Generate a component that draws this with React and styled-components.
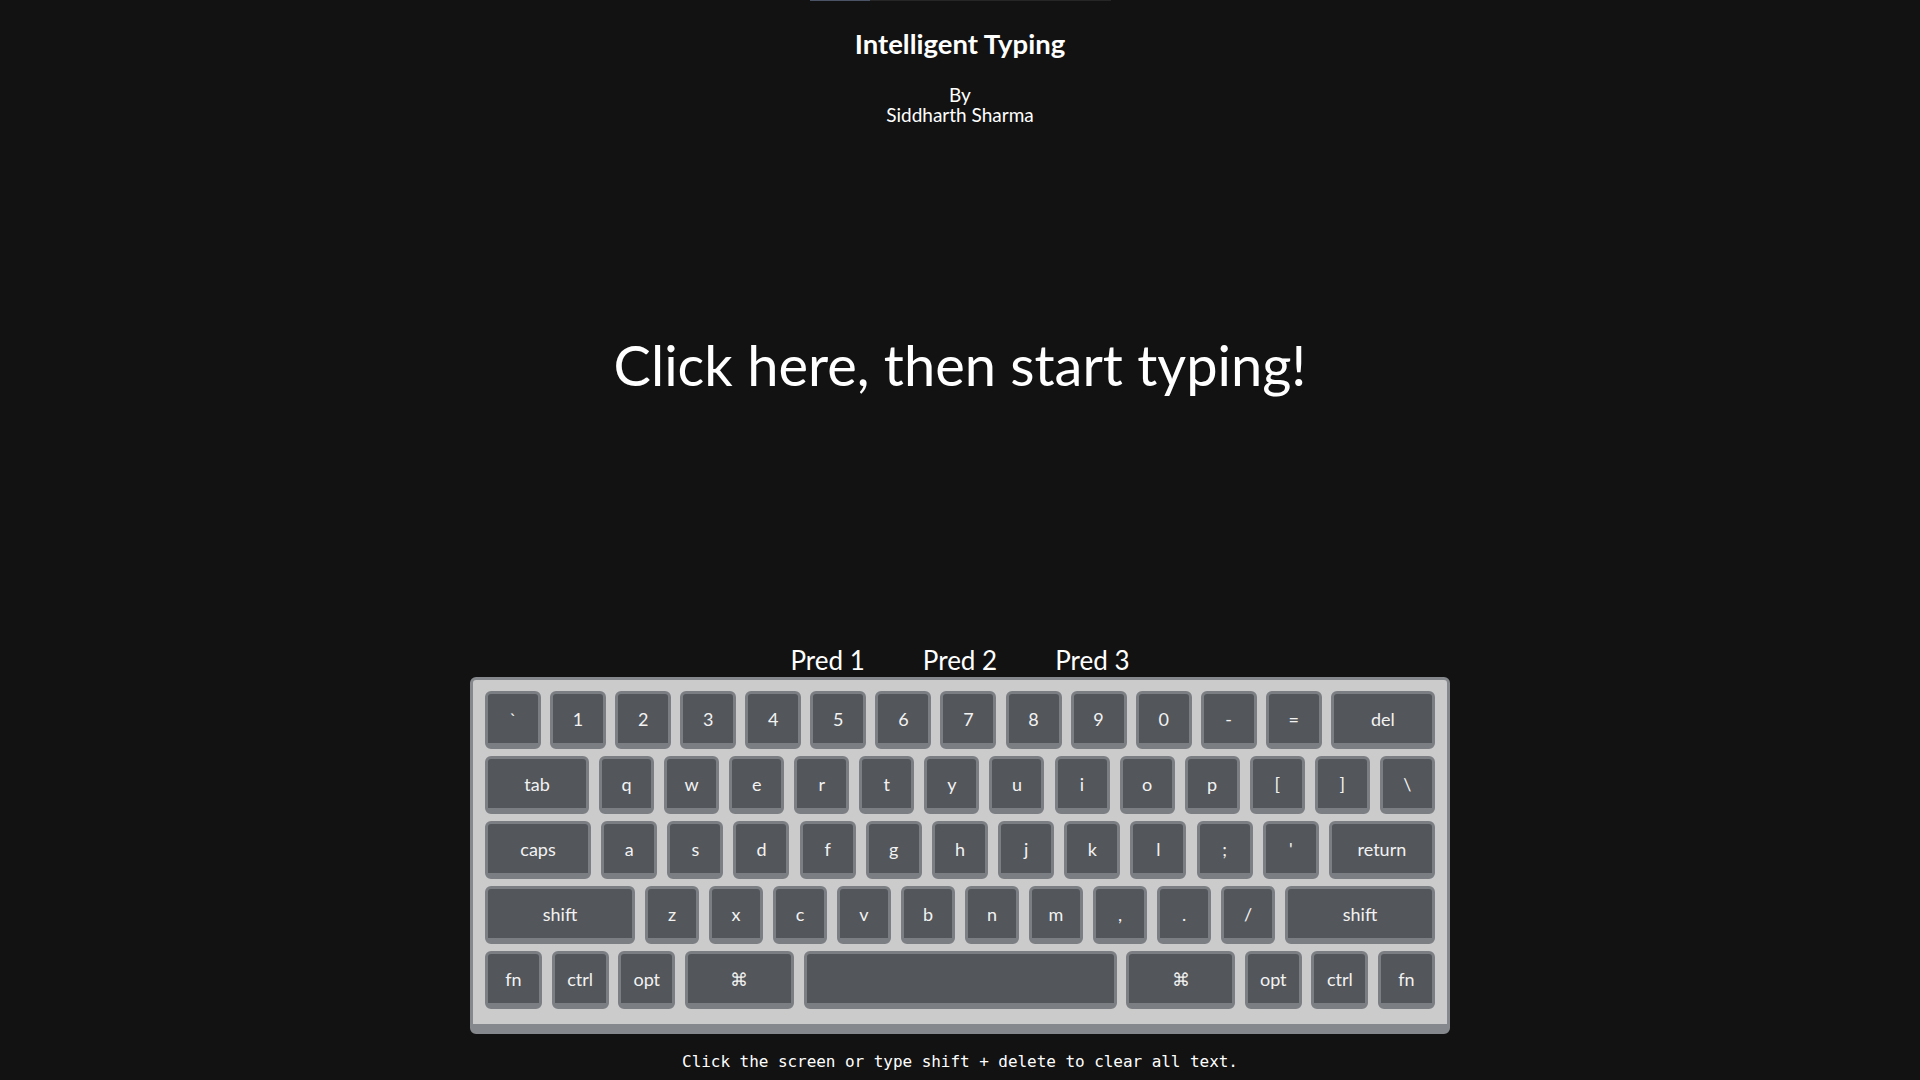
import React from "react";
import styled, { createGlobalStyle } from "styled-components";

const GlobalStyle = createGlobalStyle`
  html, body {
    margin: 0;
    padding: 0;
    background: #121212;
  }
  body {
    color: #ffffff;
    font-family: Lato, "Noto Sans", sans-serif;
  }
`;

const Page = styled.div`
  min-height: 100vh;
  display: flex;
  flex-direction: column;
  align-items: center;
`;

const Track = styled.div`
  width: 301px;
  height: 1px;
  background: #262626;
  display: flex;
`;

const Thumb = styled.div`
  width: 60px;
  height: 1px;
  background: #4a5466;
`;

const Title = styled.h2`
  margin: 27px 0 0;
  font-size: 27.5px;
  line-height: 32px;
  font-weight: 700;
  text-align: center;
`;

const Author = styled.div`
  margin-top: 25px;
  font-size: 19px;
  line-height: 20px;
  text-align: center;
`;

const Prompt = styled.div`
  margin-top: 206px;
  font-size: 56px;
  line-height: 67px;
  font-weight: 400;
  text-align: center;
`;

const Preds = styled.div`
  margin-top: 247px;
  display: flex;
  gap: 58px;
  justify-content: center;
  font-size: 26px;
  line-height: 30px;
`;

const Pred = styled.span`
  color: #ffffff;
`;

const Keyboard = styled.div`
  margin-top: 2px;
  width: 980px;
  box-sizing: border-box;
  background: #cbcbcb;
  border: 3px solid #85888c;
  border-bottom-width: 10px;
  border-radius: 6px;
  padding: 11px 12px 15px;
  display: flex;
  flex-direction: column;
  gap: 7px;
`;

const Row = styled.div`
  display: flex;
  justify-content: space-between;
`;

const Key = styled.div`
  width: ${(p) => p.$w}px;
  height: 58px;
  box-sizing: border-box;
  background: #53565b;
  border: 3px solid #7b7e83;
  border-bottom-width: 6px;
  border-radius: 6px;
  display: flex;
  align-items: center;
  justify-content: center;
  color: #f2f2f2;
  font-size: 18px;
  line-height: 1;
`;

const Footer = styled.div`
  margin-top: 18px;
  font-family: "DejaVu Sans Mono", "Liberation Mono", monospace;
  font-size: 16px;
  line-height: 20px;
  color: #ffffff;
  letter-spacing: -0.05px;
`;

const rows = [
  [
    ...["`", "1", "2", "3", "4", "5", "6", "7", "8", "9", "0", "-", "="].map((k) => [k, 56]),
    ["del", 104],
  ],
  [
    ["tab", 104],
    ...["q", "w", "e", "r", "t", "y", "u", "i", "o", "p", "[", "]", "\\"].map((k) => [k, 55]),
  ],
  [
    ["caps", 106],
    ...["a", "s", "d", "f", "g", "h", "j", "k", "l", ";", "'"].map((k) => [k, 56]),
    ["return", 106],
  ],
  [
    ["shift", 150],
    ...["z", "x", "c", "v", "b", "n", "m", ",", ".", "/"].map((k) => [k, 54]),
    ["shift", 150],
  ],
  [
    ["fn", 57],
    ["ctrl", 57],
    ["opt", 57],
    ["⌘", 109],
    ["", 313],
    ["⌘", 109],
    ["opt", 57],
    ["ctrl", 57],
    ["fn", 57],
  ],
];

export default function App() {
  return (
    <>
      <GlobalStyle />
      <Page>
        <Track>
          <Thumb />
        </Track>
        <Title>Intelligent Typing</Title>
        <Author>
          By
          <br />
          Siddharth Sharma
        </Author>
        <Prompt>Click here, then start typing!</Prompt>
        <Preds>
          <Pred>Pred 1</Pred>
          <Pred>Pred 2</Pred>
          <Pred>Pred 3</Pred>
        </Preds>
        <Keyboard>
          {rows.map((row, i) => (
            <Row key={i}>
              {row.map(([label, w], j) => (
                <Key key={j} $w={w}>
                  {label}
                </Key>
              ))}
            </Row>
          ))}
        </Keyboard>
        <Footer>Click the screen or type shift + delete to clear all text.</Footer>
      </Page>
    </>
  );
}
